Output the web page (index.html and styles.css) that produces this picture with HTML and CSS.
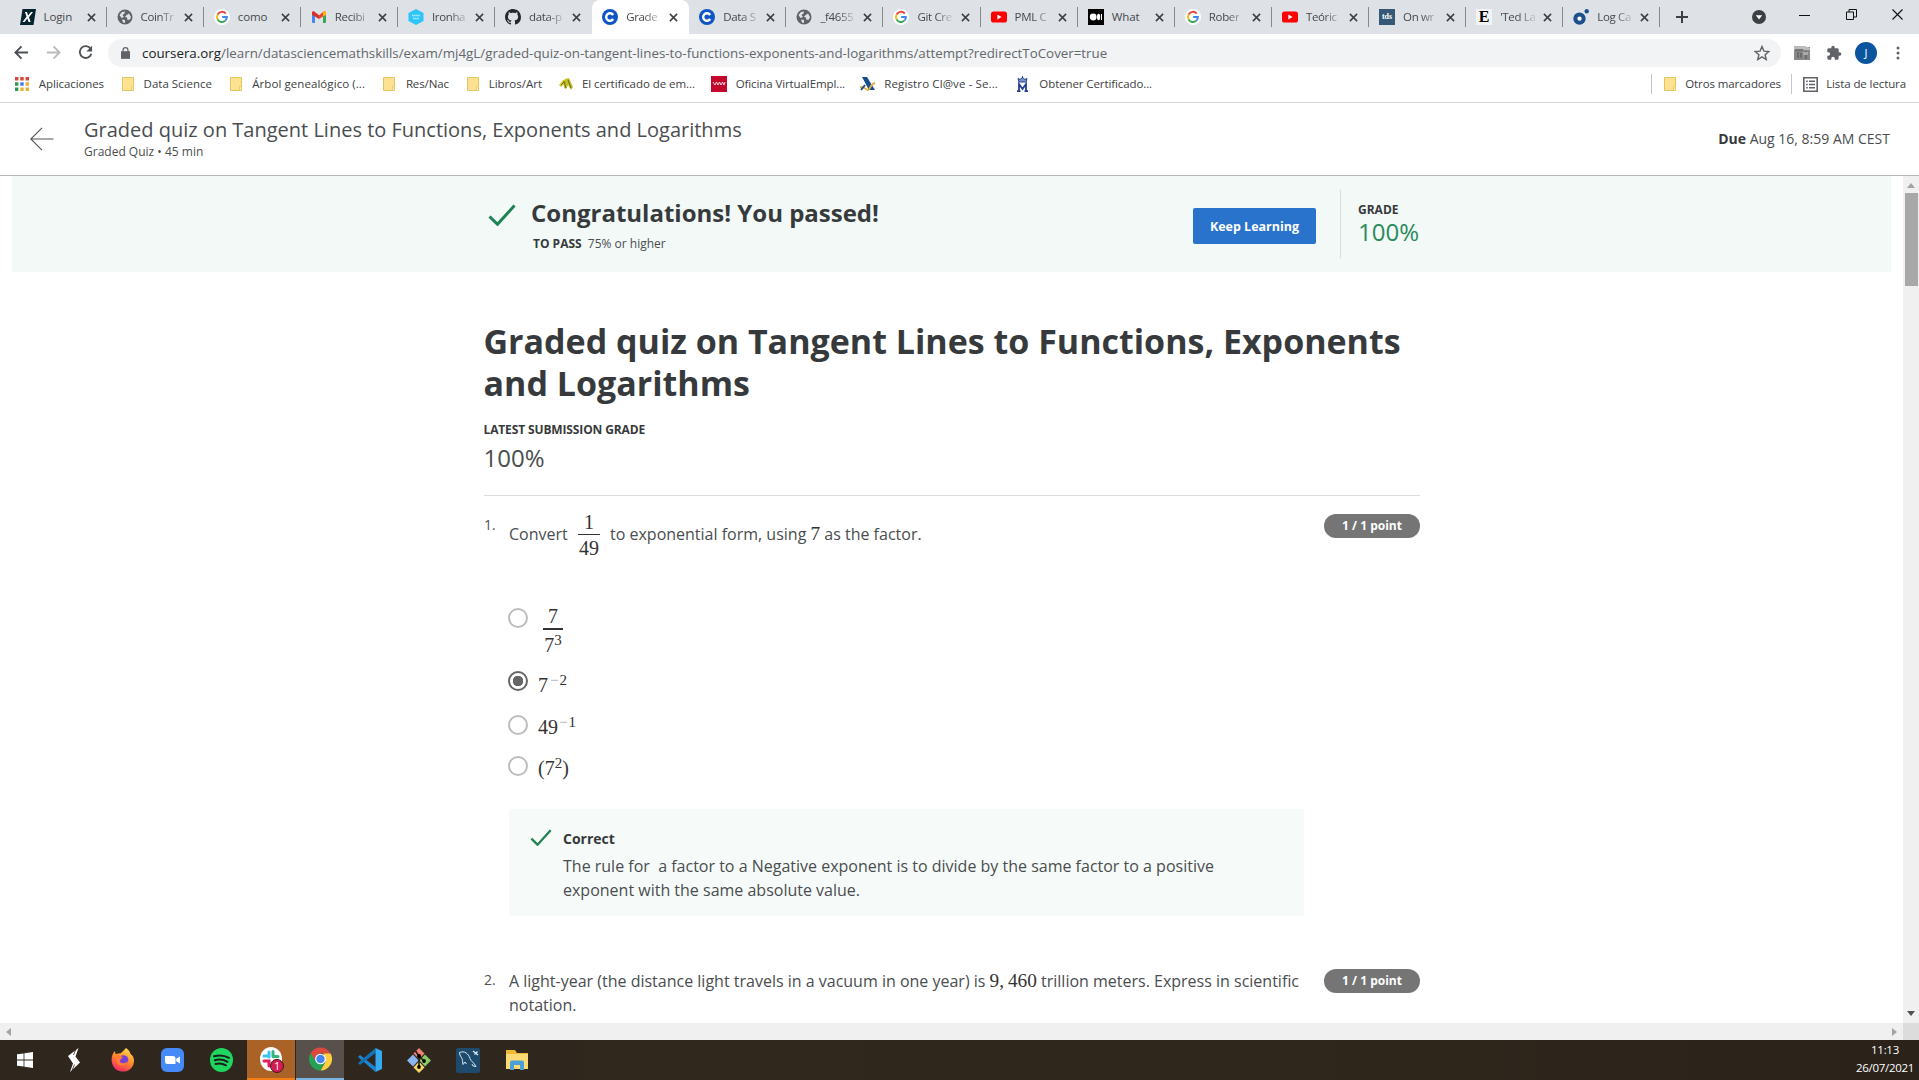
FILE: index.html
```html
<!DOCTYPE html>
<html lang="es">
<head>
<meta charset="utf-8">
<title>Graded quiz on Tangent Lines to Functions, Exponents and Logarithms</title>
<link rel="stylesheet" href="styles.css">
</head>
<body>
<svg class="defs" aria-hidden="true">
  <symbol id="google" viewBox="0 0 18 18"><circle cx="9" cy="9" r="9" fill="#fff"/><path d="M13.2 5.1A5.6 5.6 0 0 0 4 6.3" stroke="#ea4335" fill="none" stroke-width="2.2"/><path d="M4 6.3a5.6 5.6 0 0 0 0 5.4" stroke="#fbbc05" fill="none" stroke-width="2.2"/><path d="M4 11.7a5.6 5.6 0 0 0 8.8 1.4" stroke="#34a853" fill="none" stroke-width="2.2"/><path d="M12.8 13.1A5.6 5.6 0 0 0 14.5 9H9.2" stroke="#4285f4" fill="none" stroke-width="2.2"/></symbol>
  <symbol id="globe" viewBox="0 0 16 16"><circle cx="8" cy="8" r="7.5" fill="#5f6368"/><path d="M2.500 6l2.500-3 3-.500-.500 2L5.500 6 7 8 4.500 9zM9 6.500l3-2 2 3.500-1 2.500-2.500.500-.500-2.500-2-.500zM5 10.500l3 .5v3l-2-.500z" fill="#dee1e6"/></symbol>
  <symbol id="coursera" viewBox="0 0 16 16"><circle cx="8" cy="8" r="8" fill="#0f56c5"/><path d="M11.2 6A3.8 3.8 0 1 0 11.2 10" fill="none" stroke="#fff" stroke-width="2.4"/></symbol>
  <symbol id="youtube" viewBox="0 0 16 16"><rect y="2.4" width="16" height="11.2" rx="2.6" fill="#f00"/><path d="M6.4 5.5v5L10.6 8z" fill="#fff"/></symbol>
  <symbol id="close" viewBox="0 0 10 10"><path d="M1 1l8 8M9 1L1 9" stroke="#3c4043" stroke-width="1.7" fill="none"/></symbol>
  <symbol id="folder" viewBox="0 0 12 14"><path d="M.5.5h11v13H.5z" fill="#fde293" stroke="#e5c45c"/><path d="M9.500 9.500h2v4h-2z" fill="#fff0b8" stroke="#e5c45c" stroke-width=".8"/></symbol>
  <symbol id="check" viewBox="0 0 28 22"><path d="M1.5 12.5l8 7.8L26.5 1.5" fill="none" stroke="#1f8354" stroke-width="3"/></symbol>
</svg>

<header class="browser">
  <div class="tabstrip">
    <div class="tab"><svg class="fav" viewBox="0 0 16 16"><path d="M2.5 0H16l-2.500 16H0z" fill="#06232e"/><path d="M5 3l2 0 1.100 3.500L11 3h2L9 8.200l1.600 4.800h-2L7.400 9.600 4.500 13h-2l4-5.200z" fill="#fff"/></svg><span class="name">Login</span><svg class="x"><use href="#close"/></svg></div>
    <div class="tab"><svg class="fav"><use href="#globe"/></svg><span class="name">CoinTr</span><svg class="x"><use href="#close"/></svg></div>
    <div class="tab"><svg class="fav"><use href="#google"/></svg><span class="name">como</span><svg class="x"><use href="#close"/></svg></div>
    <div class="tab"><svg class="fav" viewBox="0 0 16 16"><path d="M1 3h3v11H2a1 1 0 0 1-1-1z" fill="#4285f4"/><path d="M12 3h3v10a1 1 0 0 1-1 1h-2z" fill="#34a853"/><path d="M1 3.8C1 2.3 2.6 2 3.6 2.8L8 6.2v3.7L1 5.7z" fill="#d93025"/><path d="M15 3.8c0-1.5-1.600-1.800-2.600-1L8 6.200v3.700l7-4.200z" fill="#ea4335"/><path d="M12 3.200l.5-.4c1-.8 2.500-.5 2.500 1v1.900l-3 1.800z" fill="#fbbc04"/></svg><span class="name">Recibi</span><svg class="x"><use href="#close"/></svg></div>
    <div class="tab"><svg class="fav" viewBox="0 0 16 16"><path d="M8 0l7.500 4v8L8 16 .5 12V4z" fill="#2dc5fa"/><path d="M4 6.500h8M5 9.500h6" stroke="#b8edff" stroke-width="1.400" stroke-dasharray="1.500 .6"/></svg><span class="name">Ironha</span><svg class="x"><use href="#close"/></svg></div>
    <div class="tab"><svg class="fav" viewBox="0 0 16 16"><path fill="#24292e" fill-rule="evenodd" d="M8 0C3.580 0 0 3.580 0 8c0 3.540 2.290 6.530 5.470 7.590.4.070.55-.17.55-.38 0-.19-.01-.82-.01-1.490-2.010.37-2.530-.49-2.690-.94-.09-.23-.48-.94-.82-1.130-.28-.15-.68-.52-.01-.53.63-.01 1.080.58 1.230.82.72 1.210 1.870.87 2.330.66.070-.52.28-.87.51-1.070-1.780-.2-3.640-.89-3.640-3.950 0-.87.31-1.590.82-2.150-.08-.2-.36-1.020.08-2.120 0 0 .67-.21 2.200.82.64-.18 1.320-.27 2-.27s1.360.09 2 .27c1.530-1.040 2.200-.82 2.200-.82.44 1.100.16 1.920.08 2.120.51.56.82 1.270.82 2.150 0 3.070-1.870 3.750-3.650 3.950.29.25.54.73.54 1.480 0 1.070-.01 1.930-.01 2.200 0 .21.15.46.55.38A8.010 8.010 0 0 0 16 8c0-4.420-3.580-8-8-8z"/></svg><span class="name">data-p</span><svg class="x"><use href="#close"/></svg></div>
    <div class="tab active"><svg class="fav"><use href="#coursera"/></svg><span class="name">Grade</span><svg class="x"><use href="#close"/></svg></div>
    <div class="tab"><svg class="fav"><use href="#coursera"/></svg><span class="name">Data S</span><svg class="x"><use href="#close"/></svg></div>
    <div class="tab"><svg class="fav"><use href="#globe"/></svg><span class="name">_f4655</span><svg class="x"><use href="#close"/></svg></div>
    <div class="tab"><svg class="fav"><use href="#google"/></svg><span class="name">Git Cre</span><svg class="x"><use href="#close"/></svg></div>
    <div class="tab"><svg class="fav"><use href="#youtube"/></svg><span class="name">PML C</span><svg class="x"><use href="#close"/></svg></div>
    <div class="tab"><svg class="fav" viewBox="0 0 16 16"><path d="M0 0h16v16H0z"/><circle cx="5.200" cy="8" r="3.400" fill="#fff"/><ellipse cx="10.600" cy="8" rx="1.600" ry="3.200" fill="#fff"/><path d="M13.500 5v6" stroke="#fff"/></svg><span class="name">What</span><svg class="x"><use href="#close"/></svg></div>
    <div class="tab"><svg class="fav"><use href="#google"/></svg><span class="name">Rober</span><svg class="x"><use href="#close"/></svg></div>
    <div class="tab"><svg class="fav"><use href="#youtube"/></svg><span class="name">Teóric</span><svg class="x"><use href="#close"/></svg></div>
    <div class="tab"><span class="fav tds">tds</span><span class="name">On wr</span><svg class="x"><use href="#close"/></svg></div>
    <div class="tab"><span class="fav letter-e">E</span><span class="name">'Ted La</span><svg class="x"><use href="#close"/></svg></div>
    <div class="tab"><svg class="fav" viewBox="0 0 16 16"><circle cx="6.500" cy="9.600" r="4.200" fill="#fff" stroke="#1d4f8c" stroke-width="4"/><circle cx="13.700" cy="2.300" r="2.200" fill="#1d4f8c"/></svg><span class="name">Log Ca</span><svg class="x"><use href="#close"/></svg></div>
    <svg class="newtab" viewBox="0 0 14 14"><path d="M7 1v12M1 7h12" stroke="#3c4043" stroke-width="2"/></svg>
    <div class="window-controls">
      <svg width="14" height="14" viewBox="0 0 14 14"><circle cx="7" cy="7" r="7" fill="#3c4043"/><path d="M3.800 5.300h6.400L7 9.500z" fill="#fff"/></svg>
      <svg width="11" height="11" viewBox="0 0 11 11"><path d="M0 5.500h11" stroke="#111" /></svg>
      <svg width="11" height="11" viewBox="0 0 11 11"><path d="M.5 3h7v7.500h-7zM3 3V.5h7.500V8H7.500" fill="none" stroke="#111"/></svg>
      <svg width="11" height="11" viewBox="0 0 11 11"><path d="M.5.5l10 10M10.500.5l-10 10" fill="none" stroke="#111" stroke-width="1.100"/></svg>
    </div>
  </div>
  <div class="toolbar">
    <svg class="nav" viewBox="0 0 16 16"><path d="M15 8H2M8 1.500L1.500 8 8 14.500" fill="none" stroke="#4d5156" stroke-width="2"/></svg>
    <svg class="nav" viewBox="0 0 16 16"><path d="M1 8h13M8 1.500L14.500 8 8 14.500" fill="none" stroke="#babcbe" stroke-width="2"/></svg>
    <svg class="nav" viewBox="0 0 16 16"><path d="M13.600 4.200A6.300 6.300 0 1 0 14.200 9.500" fill="none" stroke="#4d5156" stroke-width="2"/><path d="M15 .8v6H9z" fill="#4d5156"/></svg>
    <div class="omnibox">
      <svg width="9" height="12" viewBox="0 0 10 13"><path d="M0 4.500h10V13H0z" fill="#5f6368"/><path d="M2.300 5V3.300a2.700 2.700 0 0 1 5.400 0V5" fill="none" stroke="#5f6368" stroke-width="1.400"/></svg>
      <span class="url"><b>coursera.org</b>/learn/datasciencemathskills/exam/mj4gL/graded-quiz-on-tangent-lines-to-functions-exponents-and-logarithms/attempt?redirectToCover=true</span>
      <svg class="star" viewBox="0 0 16 16"><path d="M8 1.500l1.900 4.600 4.900.4-3.700 3.200 1.100 4.800L8 11.900l-4.200 2.600 1.100-4.800L1.200 6.500l4.900-.4z" fill="none" stroke="#5f6368" stroke-width="1.400"/></svg>
    </div>
    <svg class="ext" viewBox="0 0 16 16"><path d="M0 2h16v13H0z" fill="#888"/><path d="M0 1h11l5 2v2H0z" fill="#bbb"/><path d="M1 5h8M4 7v6M7 8v5M12 6v8" stroke="#666" stroke-width="1.600"/><path d="M9 7h5v3H9z" fill="#aaa"/></svg>
    <svg class="puzzle" viewBox="0 0 24 24"><path fill="#5f6368" d="M20.500 11H19V7a2 2 0 0 0-2-2h-4V3.500a2.500 2.500 0 0 0-5 0V5H4a2 2 0 0 0-2 2v3.800h1.500a2.700 2.700 0 0 1 0 5.400H2V20a2 2 0 0 0 2 2h3.800v-1.500a2.700 2.700 0 0 1 5.400 0V22H17a2 2 0 0 0 2-2v-4h1.500a2.500 2.500 0 0 0 0-5z"/></svg>
    <span class="avatar">J</span>
    <svg class="menu" viewBox="0 0 4 14"><circle cx="2" cy="2" r="1.500"/><circle cx="2" cy="7" r="1.500"/><circle cx="2" cy="12" r="1.500"/></svg>
  </div>
  <nav class="bookmarks">
    <span class="bm b1"><svg width="14" height="14" viewBox="0 0 14 14"><path d="M0 0h3.400v3.400H0zM5.300 0h3.400v3.400H5.300zM10.600 0H14v3.400h-3.400z" fill="#d9453a"/><path d="M0 5.300h3.400v3.400H0zM0 10.600h3.400V14H0z" fill="#2e9b57"/><path d="M5.300 5.300h3.400v3.400H5.300z" fill="#3e7ee8"/><path d="M10.600 5.300H14v3.400h-3.400zM5.300 10.600h3.400V14H5.300zM10.600 10.600H14V14h-3.400z" fill="#e6b23a"/></svg><span>Aplicaciones</span></span>
    <span class="bm b2"><svg class="dir"><use href="#folder"/></svg><span>Data Science</span></span>
    <span class="bm b3"><svg class="dir"><use href="#folder"/></svg><span>Árbol genealógico (...</span></span>
    <span class="bm b4"><svg class="dir"><use href="#folder"/></svg><span>Res/Nac</span></span>
    <span class="bm b5"><svg class="dir"><use href="#folder"/></svg><span>Libros/Art</span></span>
    <span class="bm b6"><svg width="14" height="12" viewBox="0 0 14 12"><path d="M0 7l4-5 4-1-1 8-3-2-2 2z" fill="#e0c51d"/><path d="M6 1l4-1 4 9-2 3-3-5-2 4-2-1z" fill="#c5bd21"/><path d="M5 3l2 7M9 2l3 8M2 7l3-3" fill="none" stroke="#5b7028"/></svg><span>El certificado de em...</span></span>
    <span class="bm b7"><svg width="16" height="16" viewBox="0 0 16 16"><path d="M0 0h16v16H0z" fill="#c3082c"/><path d="M2 6l2 3 1.500-3L7 9l1.500-3L10 9l1.500-3L13 9l1-3" fill="none" stroke="#fff" stroke-width=".8"/></svg><span>Oficina VirtualEmpl...</span></span>
    <span class="bm b8"><svg width="16" height="16" viewBox="0 0 16 16"><path d="M2 1h5l8 13h-6z" fill="#164d8b"/><path d="M0 11c6 0 6 3 8 3s2-6 7-7" fill="none" stroke="#e0b044" stroke-width="1.800"/><path d="M1 14l4-5" stroke="#164d8b" stroke-width="2"/></svg><span>Registro Cl@ve - Se...</span></span>
    <span class="bm b9"><svg width="13" height="16" viewBox="0 0 13 16"><path d="M1 15.200h3.500M8.500 15.200H12M3 15V8l3.500 5L10 8v7" fill="none" stroke="#233f90" stroke-width="1.800"/><path d="M2 2.500l2 1 2.500-2L9 3.500l2-1-1 3.500H3zM6.500 0v2" fill="#8291c4" stroke="#233f90"/></svg><span>Obtener Certificado...</span></span>
    <span class="bm b10"><svg class="dir"><use href="#folder"/></svg><span>Otros marcadores</span></span>
    <span class="bm b11"><svg width="15" height="15" viewBox="0 0 15 15"><path d="M.8.8h13.400v13.400H.8z" fill="none" stroke="#5f6368" stroke-width="1.600"/><path d="M3.200 4.300h1.600M6 4.300h6M3.200 7.500h1.600M6 7.500h6M3.200 10.700h1.600M6 10.700h6" stroke="#5f6368" stroke-width="1.500"/></svg><span>Lista de lectura</span></span>
  </nav>
</header>

<section class="quizbar">
  <svg class="back" viewBox="0 0 24 24"><path d="M23.500 12H1M12 .800L.800 12 12 23.200" fill="none" stroke="#555" stroke-width="1.100"/></svg>
  <div class="quizname"><div class="qtitle">Graded quiz on Tangent Lines to Functions, Exponents and Logarithms</div><div class="qsub">Graded Quiz • 45 min</div></div>
  <div class="due"><b>Due</b> Aug 16, 8:59 AM CEST</div>
</section>

<div class="viewport">
  <main>
    <section class="banner">
      <svg class="bigcheck"><use href="#check"/></svg>
      <div class="congrats"><h2>Congratulations! You passed!</h2><p><b>TO PASS</b> <span>75% or higher</span></p></div>
      <button>Keep Learning</button>
      <div class="grade"><b>GRADE</b><span>100%</span></div>
    </section>
    <article>
      <h1>Graded quiz on Tangent Lines to Functions, Exponents and Logarithms</h1>
      <h4>LATEST SUBMISSION GRADE</h4>
      <div class="score">100%</div>
      <section class="question first">
        <span class="num">1.</span>
        <div class="body">
          <div class="prompt"><span class="convert">Convert</span><span class="frac"><i>1</i><i>49</i></span><span class="rest">to exponential form, using <span class="math">7</span> as the factor.</span></div>
          <div class="options">
            <div class="opt o1"><i class="radio"></i><span class="frac bold"><i>7</i><i>7<sup>3</sup></i></span></div>
            <div class="opt o2"><i class="radio on"></i><span class="math strong">7<sup><em>−</em>2</sup></span></div>
            <div class="opt o3"><i class="radio"></i><span class="math">49<sup><em>−</em>1</sup></span></div>
            <div class="opt o4"><i class="radio"></i><span class="math">(7<sup>2</sup>)</span></div>
          </div>
          <div class="feedback"><svg viewBox="0 0 28 22"><use href="#check" width="28" height="22"/></svg><div><b>Correct</b><p>The rule for&nbsp; a factor to a Negative exponent is to divide by the same factor to a positive<br>exponent with the same absolute value.</p></div></div>
        </div>
        <span class="points">1 / 1 point</span>
      </section>
      <section class="question second">
        <span class="num">2.</span>
        <div class="body"><p>A light-year (the distance light travels in a vacuum in one year) is <span class="math">9,&thinsp;460</span> trillion meters. Express in scientific<br>notation.</p></div>
        <span class="points">1 / 1 point</span>
      </section>
    </article>
  </main>
  <div class="vscroll"><svg viewBox="0 0 8 5"><path d="M0 5l4-5 4 5z" fill="#a3a3a3"/></svg><i class="thumb"></i><svg viewBox="0 0 8 5"><path d="M0 0l4 5 4-5z" fill="#505050"/></svg></div>
</div>
<div class="hscroll"><svg viewBox="0 0 5 8"><path d="M5 0L0 4l5 4z" fill="#a3a3a3"/></svg><svg viewBox="0 0 5 8"><path d="M0 0l5 4-5 4z" fill="#a3a3a3"/></svg><i class="corner"></i></div>

<footer class="taskbar">
  <span class="app"><svg width="16" height="16" viewBox="0 0 16 16"><path d="M0 2.300L6.600 1.400v6.100H0zM7.400 1.300L16 0v7.500H7.400zM0 8.400h6.600v6.200L0 13.700zM7.400 8.400H16V16l-8.600-1.300z" fill="#fff"/></svg></span>
  <span class="app"><svg width="12" height="24" viewBox="0 0 12 24"><path d="M10.500 0L7.500 8.500 12 14.500 2 24l3-8.500L0 8z" fill="#fff"/><path d="M8 1L5.500 7M4 22.500L6.500 16.500" stroke="#2f261e" stroke-width=".8"/></svg></span>
  <span class="app"><svg width="24" height="24" viewBox="0 0 24 24"><defs><linearGradient id="ff" x1=".8" y1="0" x2=".3" y2="1"><stop offset="0" stop-color="#ffe14d"/><stop offset=".5" stop-color="#ff8a2a"/><stop offset="1" stop-color="#f5246a"/></linearGradient></defs><path d="M15 0c3 2 4 4 4.500 6C23 8 24 13 22 17.500A11.300 11.300 0 0 1 1 15C0 10 1 6 4 3l.5 3L8 5.500c2 0 4-2 7-5.500z" fill="url(#ff)"/><circle cx="12.500" cy="12" r="4.800" fill="#7542d8"/><path d="M5 7c4 0 4 1 7 2-1 2-3 2-3 4 0 3 5 3 8 0-1 5-6 6-9 4-3-2-4-6-3-10z" fill="#ff7a32"/></svg></span>
  <span class="app"><svg width="23" height="24" viewBox="0 0 23 24"><rect width="23" height="24" rx="6" fill="#468af7"/><path d="M4 8h8a2.500 2.500 0 0 1 2.500 2.500V16h-8A2.500 2.500 0 0 1 4 13.500zM15.200 10.800L19 8.500v7l-3.800-2.300z" fill="#fff"/></svg></span>
  <span class="app"><svg width="23" height="24" viewBox="0 0 23 24"><ellipse cx="11.500" cy="12" rx="11.500" ry="12" fill="#1ed760"/><path d="M4 8.300c5-1.500 10.500-1 15 1.500M4.800 12.300c4.200-1.200 8.800-.7 12.700 1.500M5.500 16c3.500-1 7.200-.500 10.500 1.300" fill="none" stroke="#1c1e1a" stroke-width="2" stroke-linecap="round"/></svg></span>
  <span class="app slack"><svg width="22" height="24" viewBox="0 0 22 24"><ellipse cx="11" cy="12" rx="11" ry="12" fill="#fff"/><path d="M9 5v5M4 9h5" stroke="#36c5f0" stroke-width="3" stroke-linecap="round"/><path d="M13 4.500v5M13 9.500h5" stroke="#2eb67d" stroke-width="3" stroke-linecap="round"/><path d="M4 14h5v5" fill="none" stroke="#e01e5a" stroke-width="3" stroke-linecap="round"/><path d="M13 14h5M13 14v5" stroke="#ecb22e" stroke-width="3"/></svg><i class="count">1</i></span>
  <span class="app chrome"><svg width="23" height="24" viewBox="0 0 24 24"><path d="M22.400 6A12 12 0 0 1 12 24l5-9-2-9z" fill="#fdcf40"/><path d="M1.600 6A12 12 0 0 0 12 24l5-9-5-1z" fill="#26a055"/><path d="M1.600 6A12 12 0 0 1 22.400 6H12l-5 8z" fill="#dc4a3d"/><circle cx="12" cy="12" r="5.600" fill="#fff"/><circle cx="12" cy="12" r="4.400" fill="#4285f4"/></svg></span>
  <span class="app"><svg width="24" height="24" viewBox="0 0 24 24"><path d="M17 0l7 3v18l-7 3L6 13.500 2 17 0 15.500v-7L2 7l4 3.500zM17.500 6.500L10 12l7.500 5.500z" fill="none"/><path d="M2 7l15.500 12V24L0 9z" fill="#1b86cf"/><path d="M2 17L17.500 5V0L0 15z" fill="#1472b4"/><path d="M17.500 0L24 3v18l-6.500 3z" fill="#35a9f2"/></svg></span>
  <span class="app"><svg width="24" height="25" viewBox="0 0 24 25"><path d="M12 0l5.500 5.500L12 11 6.500 5.500z" fill="#f08172"/><path d="M6 6.500l5.500 6L6 18.500 0 12.500z" fill="#8bb5ee"/><path d="M18 6.500l6 6-6 6-5.500-6z" fill="#89cc67"/><path d="M12 13.500l5.500 6L12 25l-5.500-5.500z" fill="#f8d568"/><path d="M8.500 3l3.500 5v11M12 8l5 5" fill="none" stroke="#2b211c" stroke-width="1.600"/><circle cx="12" cy="8" r="2"/><circle cx="17" cy="13" r="1.900"/><circle cx="12" cy="19" r="1.900"/></svg></span>
  <span class="app"><svg width="24" height="25" viewBox="0 0 24 25"><rect width="24" height="25" rx="2" fill="#1e4a6d"/><path d="M3.500 4.500c5-2 9 1 10.500 6 1 3 4 4 6 8l-3-.500-1-2M3.500 4.500c0 4 3 5 3 8l.5 4 2-2.500 1.500 2" fill="none" stroke="#dbe9f2"/><path d="M17 3l5 4M18.500 6.500l3-3" stroke="#dbe9f2" stroke-width="1.300"/></svg></span>
  <span class="app"><svg width="22" height="20" viewBox="0 0 22 20"><path d="M0 0h9l2 3h11v16H0z" fill="#edb935"/><path d="M0 4h22v15H0z" fill="#fbd974"/><path d="M4 20v-7.500A2 2 0 0 1 6 10.500h10a2 2 0 0 1 2 2V20h-4v-5H8v5z" fill="#4a9fd8"/></svg></span>
  <div class="clock"><span>11:13</span><span>26/07/2021</span></div>
</footer>
</body>
</html>
```

FILE: styles.css
```css
* { box-sizing: border-box; }
body { margin: 0; width: 1919px; height: 1080px; overflow: hidden; display: flex; flex-direction: column; background: #fff; color: #373a3c; font-family: "Open Sans", "Noto Sans", sans-serif; }
h1, h2, h4, p { margin: 0; }
svg { display: block; flex: none; }
i { font-style: normal; }
.defs { position: absolute; width: 0; height: 0; }

/* browser chrome */
.browser { flex: none; height: 103px; border-bottom: 1px solid #d3d5d8; }
.tabstrip { height: 34px; background: #dee1e6; display: flex; align-items: center; padding-left: 9.500px; }
.tab { width: 97.120px; height: 34px; flex: none; display: flex; align-items: center; padding: 0 11px 0 10px; position: relative; }
.tab::after { content: ""; position: absolute; right: 0; top: 7px; width: 1px; height: 20px; background: #85888d; }
.tab.active { background: #fff; border-radius: 8px 8px 0 0; }
.tab.active::after, .tab:nth-child(6)::after { display: none; }
.fav { width: 16px; height: 16px; flex: none; }
.name { margin-left: 8px; white-space: nowrap; font-size: 11.500px; letter-spacing: -.350px; line-height: 18px; color: #45484d; -webkit-mask-image: linear-gradient(90deg, #000 18px, rgba(0,0,0,.2) 34px); mask-image: linear-gradient(90deg, #000 18px, rgba(0,0,0,.2) 34px); }
.tab:first-child .name, .tab:nth-child(3) .name, .tab:nth-child(12) .name { -webkit-mask-image: none; mask-image: none; letter-spacing: -.1px; }
.x { width: 9px; height: 9px; margin-left: auto; }
.tds { background: #355876; color: #fff; font: bold 8px/16px "Liberation Serif", serif; text-align: center; }
.letter-e { background: #f3f3f3; color: #000; font: bold 16px/16px "Liberation Serif", serif; text-align: center; }
.newtab { width: 14px; height: 14px; margin-left: 15px; }
.window-controls { margin-left: auto; display: flex; align-items: center; gap: 33.500px; padding-right: 16px; }
.window-controls svg + svg { margin-top: -3px; }
.window-controls svg + svg + svg { margin-left: 2px; margin-top: -5px; }

.toolbar { height: 36px; display: flex; align-items: center; padding-left: 14px; padding-top: 1px; }
.nav { width: 15px; height: 15px; margin-right: 17px; }
.omnibox { width: 1673px; height: 28px; margin-left: -2px; border-radius: 14px; background: #f1f3f4; display: flex; align-items: center; padding-left: 13px; flex: none; }
.url { margin-left: 12px; font-size: 13.350px; letter-spacing: 0; color: #63676c; white-space: nowrap; }
.url b { font-weight: 400; color: #202124; }
.star { width: 16px; height: 16px; margin-left: auto; margin-right: 11px; }
.ext { width: 16px; height: 16px; margin-left: 13px; }
.puzzle { width: 16px; height: 16px; margin-left: 16px; }
.avatar { width: 22px; height: 22px; margin-left: 13px; border-radius: 50%; background: #0b559f; color: #fff; font-size: 11px; line-height: 22px; text-align: center; }
.menu { width: 4px; height: 14px; margin-left: 19px; fill: #5f6368; }

.bookmarks { height: 32px; display: flex; align-items: center; padding: 0 13px 4px 15px; }
.bm { display: flex; align-items: center; height: 20px; font-size: 11.500px; letter-spacing: -.1px; line-height: 18px; color: #3c4043; white-space: nowrap; }
.bm span { margin-left: auto; }
.dir { width: 12px; height: 14px; }
.b1 { width: 89px; } .b2 { width: 90px; margin-left: 18px; letter-spacing: 0; } .b3 { width: 135px; margin-left: 18px; letter-spacing: .070px; }
.b4 { width: 66px; margin-left: 18px; } .b5 { width: 75px; margin-left: 18px; letter-spacing: 0; } .b6 { width: 136px; margin-left: 17px; letter-spacing: -.050px; }
.b7 { width: 134px; margin-left: 16px; } .b8 { width: 138px; margin-left: 15px; letter-spacing: .120px; } .b9 { width: 136px; margin-left: 18px; }
.b10 { width: 130px; margin-left: auto; border-left: 1px solid #c4c6c9; padding-left: 12px; }
.b11 { width: 115px; margin-left: 10px; border-left: 1px solid #c4c6c9; padding-left: 11px; }

/* quiz header */
.quizbar { flex: none; height: 73px; border-bottom: 1px solid #b9b9b9; display: flex; align-items: center; padding: 0 29px 0 30px; color: #4a4d4f; }
.back { width: 24px; height: 24px; }
.quizname { margin-left: 30px; padding-bottom: 1px; }
.qtitle { font-size: 20px; line-height: 26px; white-space: nowrap; }
.qsub { font-size: 12px; line-height: 18px; }
.due { margin: -2px 0 0 auto; font-size: 14px; white-space: nowrap; }
.due b { color: #373a3c; }

/* page */
.viewport { flex: 1; min-height: 0; display: flex; }
main { flex: 1; height: 847px; overflow: hidden; padding-left: 12px; }
.banner { width: 1879px; height: 96px; background: #f2f9f7; display: flex; align-items: flex-start; padding-left: 476px; }
.bigcheck { width: 28px; height: 22px; margin-top: 28px; }
.congrats { width: 661px; margin-left: 15px; padding-top: 20px; }
.congrats h2 { font-size: 24px; line-height: 34px; white-space: nowrap; }
.congrats p { font-size: 12px; line-height: 18px; margin: 5px 0 0 2px; }
.congrats span { margin-left: 3px; color: #4a4d4f; }
.banner button { width: 123px; height: 36px; margin: 32px 0 0 1px; border: 0; padding: 0; border-radius: 2px; background: #2a73cc; color: #fff; font: bold 12.500px "Open Sans", sans-serif; white-space: nowrap; }
.grade { margin: 14px 0 0 24px; height: 68px; border-left: 1px solid #d6dedb; padding: 11px 0 0 17px; display: flex; flex-direction: column; }
.grade b { font-size: 12px; line-height: 18px; font-weight: 700; }
.grade span { font-size: 24px; line-height: 28px; color: #2a8a5c; margin-top: -1px; }

article { width: 936px; margin-left: 472px; padding-top: 48px; }
h1 { font-size: 34px; line-height: 42px; margin-left: -.5px; }
h4 { font-size: 12px; line-height: 18px; font-weight: 700; margin: 17px 0 0 -.5px; letter-spacing: -.130px; }
.score { font-size: 24px; line-height: 34px; margin: 2px 0 0 -.5px; color: #4a4d4f; }
.question { display: flex; align-items: flex-start; }
.first { margin-top: 20px; border-top: 1px solid #ddd; height: 474px; padding-top: 18px; }
.num { width: 25px; flex: none; font-size: 14px; line-height: 22px; color: #505355; }
.body { width: 795px; flex: none; font-size: 16px; line-height: 24px; white-space: nowrap; color: #4a4d4f; }
.points { width: 96px; height: 24px; margin-left: 20px; border-radius: 12px; background: #757575; color: #fff; font-size: 12px; font-weight: 700; line-height: 24px; text-align: center; white-space: nowrap; }
.prompt { height: 44px; display: flex; align-items: center; margin-top: -2px; }
.math, .frac { font-family: "Liberation Serif", serif; font-size: 20px; line-height: 20px; color: #333; }
.rest .math, .second .math { font-size: 19.300px; }
.frac { display: flex; flex-direction: column; align-items: center; width: 22px; text-align: center; line-height: 22px; }
.frac i { width: 100%; height: 23px; }
.frac i + i { border-top: 1px solid #333; padding-top: 2px; }
.convert { width: 69px; }
.rest { margin-left: 10px; }
.options { margin-top: 52px; }
.opt { display: flex; align-items: flex-start; }
.opt > .math { line-height: 24px; }
.radio { width: 20px; height: 20px; margin-left: -1px; border: 2px solid #bdbdbd; border-radius: 50%; flex: none; margin-right: 10px; }
.radio.on { border-color: #666; background: radial-gradient(circle, #666 0 5px, #fff 5.500px); }
.math sup, .frac sup { font-size: 15px; line-height: 0; vertical-align: 7px; }
.math em { font-style: normal; color: #aaa; margin: 0 1px; }
.o1 { height: 63px; } .o2 { height: 44px; } .o3 { height: 41px; } .o4 { height: 42px; }
.o2 .math { margin-top: 2px; } .o2 sup { margin-left: 1px; }
.o1 .frac { margin: -3px 0 0 5px; width: 20px; }
.bold i + i { border-top-width: 2px; padding-top: 4px; }
.feedback { width: 795px; height: 107px; margin-top: 11px; background: #f6fbf9; display: flex; padding: 18px 0 0 21px; }
.feedback svg { width: 22px; height: 17px; margin: 2px 11px 0 0; }
.feedback b { display: block; font-size: 14px; line-height: 24px; font-weight: 700; color: #373a3c; }
.feedback p { margin-top: 3px; }

.vscroll { width: 16px; background: #f0f0f0; display: flex; flex-direction: column; align-items: center; padding: 7px 0; }
.vscroll svg { width: 8px; height: 5px; }
.thumb { width: 13px; height: 93px; margin: 5px 0 auto 1px; background: #a8a8a8; }
.hscroll { flex: none; height: 17px; background: #f0f0f0; display: flex; align-items: center; padding-left: 6px; }
.hscroll svg { width: 5px; height: 8px; }
.hscroll svg + svg { margin-left: auto; margin-right: 6px; }
.corner { width: 16px; height: 17px; background: #dcdcdc; }

/* taskbar */
.taskbar { flex: none; height: 40px; background: linear-gradient(90deg, #2f261e, #30271c 60%, #2b221a); display: flex; }
.app { width: 48px; margin-right: 1.300px; height: 40px; display: flex; align-items: center; justify-content: center; flex: none; position: relative; left: .5px; }
.slack { background: #ab6226; border-bottom: 2px solid #f57c12; }
.chrome { background: #58504b; border-bottom: 2px solid #79b4e3; }
.count { position: absolute; left: 23px; top: 19px; width: 14px; height: 14px; border-radius: 50%; background: #d51b52; border: 1px solid #40152a; color: #fff; font-size: 10px; line-height: 12px; text-align: center; }
.clock { margin-left: auto; width: 68px; display: flex; flex-direction: column; align-items: center; font-size: 11.500px; line-height: 18px; padding-top: 1px; color: #fff; letter-spacing: -.3px; }
```
